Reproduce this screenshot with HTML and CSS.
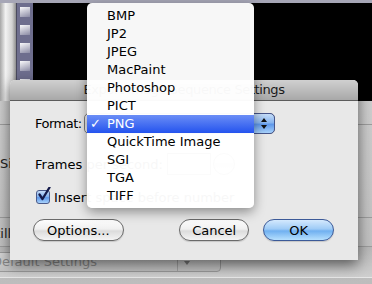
FILE: index.html
```html
<!DOCTYPE html>
<html lang="en">
<head>
  <meta charset="UTF-8" />
  <title>Export Image Sequence Settings</title>
  <link rel="stylesheet" href="styles.css">
</head>
<body>

  <div class="window">
    <div class="topbar"></div>
    <div class="viewer">
      <div class="rail"></div>
      <div class="filmstrip">
        <span class="frame"></span>
        <span class="frame"></span>
        <span class="frame"></span>
        <span class="frame"></span>
        <span class="frame"></span>
      </div>
      <div class="screen"></div>
    </div>
    <div class="panel">
      <div class="panel-row row-top"></div>
      <div class="panel-row row-size"><span class="panel-text">Size:</span></div>
      <div class="panel-row row-still"><span class="panel-text still">Still</span></div>
      <div class="panel-row row-preset">
        <div class="preset">
          <span class="preset-value">Default Settings</span>
          <span class="preset-arrow"></span>
        </div>
      </div>
    </div>
  </div>

  <div class="sheet">
    <div class="sheet-title">Export Image Sequence Settings</div>
    <div class="sheet-body">
      <div class="field-row">
        <label class="field-label">Format:</label>
        <div class="popup">
          <span class="popup-value">PNG</span>
          <span class="popup-arrows">
            <span class="arrow-up"></span>
            <span class="arrow-down"></span>
          </span>
        </div>
      </div>

      <div class="field-row fps-row">
        <label>Frames per second:</label>
        <div class="combo">
          <span class="combo-input"></span>
          <span class="combo-btn"></span>
        </div>
      </div>

      <label class="check-row">
        <span class="checkbox">
          <svg width="16" height="16" viewBox="0 0 16 16"><path d="M3.5 7.5 L6.5 12 L13.5 0.5" fill="none" stroke="#141a4a" stroke-width="2.3" stroke-linecap="round" stroke-linejoin="round"/></svg>
        </span>
        Insert space before number
      </label>

      <div class="buttons">
        <button class="btn">Options...</button>
        <button class="btn btn-cancel">Cancel</button>
        <button class="btn btn-default">OK</button>
      </div>
    </div>
  </div>

  <ul class="menu">
    <li class="menu-item">BMP</li>
    <li class="menu-item">JP2</li>
    <li class="menu-item">JPEG</li>
    <li class="menu-item">MacPaint</li>
    <li class="menu-item">Photoshop</li>
    <li class="menu-item">PICT</li>
    <li class="menu-item is-selected"><span class="check">✓</span>PNG</li>
    <li class="menu-item">QuickTime Image</li>
    <li class="menu-item">SGI</li>
    <li class="menu-item">TGA</li>
    <li class="menu-item">TIFF</li>
  </ul>

</body>
</html>
```

FILE: styles.css
```css
* {
  box-sizing: border-box;
}

body {
  margin: 0;
  width: 372px;
  height: 284px;
  overflow: hidden;
  position: relative;
  font-family: "DejaVu Sans", "Liberation Sans", sans-serif;
  font-size: 13px;
  color: #000;
  background: #c4c4c4;
}

/* movie window behind the sheet */

.window {
  display: flex;
  flex-direction: column;
  height: 284px;
}

.topbar {
  flex: none;
  height: 3px;
  background: #a6a6b6;
}

.viewer {
  flex: none;
  display: flex;
  height: 98px;
}

.rail {
  width: 16px;
  background: linear-gradient(90deg, #a6a6a6, #f2f2f2 35%, #d2d2d2 75%, #8e8e8e);
}

.filmstrip {
  width: 17px;
  display: flex;
  flex-direction: column;
  gap: 8px;
  padding: 4px 0 0 3px;
  background: #6e6e8e;
  border-left: 1px solid #4a4a5e;
}

.frame {
  width: 10px;
  height: 10px;
  background: linear-gradient(160deg, #fafafc, #8a8aa4);
}

.screen {
  flex: 1;
  background: #000;
}

.panel {
  flex: 1;
  display: flex;
  flex-direction: column;
  background: linear-gradient(#cdcdcd, #bdbdbd);
  color: #222;
}

.panel-row {
  flex: none;
  border-bottom: 1px solid #9c9c9c;
}

.row-top {
  height: 24px;
}

.row-size {
  height: 93px;
  padding-top: 31px;
  line-height: 16px;
}

.row-still {
  height: 29px;
  padding-top: 8px;
  line-height: 16px;
}

.still {
  margin-left: -13px;
}

.row-preset {
  height: 31px;
  padding-top: 5px;
  background: linear-gradient(#b8b8b8, #cfcfcf);
  border-bottom-color: #e6e6e6;
}

.preset {
  display: flex;
  width: 241px;
  height: 20px;
  margin-left: -20px;
  border: 1px solid #9a9a9a;
  border-radius: 0 4px 4px 0;
  background: linear-gradient(#d6d6d6, #c2c2c2);
}

.preset-value {
  flex: 1;
  padding-left: 11px;
  line-height: 18px;
  color: #8a8a8a;
}

.preset-arrow {
  width: 43px;
  border-left: 1px solid #a4a4a4;
  position: relative;
}

.preset-arrow::after {
  content: "";
  position: absolute;
  left: 6px;
  top: 8px;
  border-left: 3px solid transparent;
  border-right: 3px solid transparent;
  border-top: 4px solid #7a7a7a;
}

/* sheet */

.sheet {
  position: absolute;
  left: 10px;
  top: 80px;
  width: 348px;
  height: 180px;
  display: flex;
  flex-direction: column;
  background: #e8e8e8;
  border-radius: 5px 5px 0 0;
  box-shadow: 0 5px 14px rgba(0, 0, 0, 0.55);
}

.sheet-title {
  flex: none;
  height: 21px;
  line-height: 19px;
  text-align: center;
  letter-spacing: -0.4px;
  color: #1a1a1a;
  background: linear-gradient(#d0d0d0, #a8a8a8);
  border-bottom: 1px solid #5c5c5c;
  border-radius: 5px 5px 0 0;
}

.sheet-body {
  flex: 1;
  display: flex;
  flex-direction: column;
  padding: 12px 24px 0 25px;
}

.field-row {
  display: flex;
  align-items: center;
}

.field-label {
  width: 49px;
  letter-spacing: -0.5px;
}

.popup {
  display: flex;
  width: 191px;
  height: 21px;
  border: 1px solid #7c7c7c;
  border-radius: 5px;
  background: linear-gradient(#fff, #e8e8e8 50%, #f6f6f6);
}

.popup-value {
  flex: 1;
  padding-left: 10px;
  line-height: 19px;
}

.popup-arrows {
  width: 22px;
  margin: -1px -1px -1px 0;
  display: flex;
  flex-direction: column;
  align-items: center;
  justify-content: center;
  gap: 3px;
  border: 1px solid #46558a;
  border-radius: 0 5px 5px 0;
  background: linear-gradient(#c6ddf8, #88b5ef 45%, #5f98ea 55%, #a8d2fb);
}

.arrow-up,
.arrow-down {
  border-left: 3px solid transparent;
  border-right: 3px solid transparent;
}

.arrow-up {
  border-bottom: 4px solid #111;
}

.arrow-down {
  border-top: 4px solid #111;
}

.fps-row {
  margin-top: 19px;
}

.combo {
  display: flex;
  gap: 2px;
  margin-left: 4px;
  height: 22px;
}

.combo-input {
  width: 44px;
  background: #fff;
  border: 1px solid #8a8a8a;
  border-top-color: #5e5e5e;
}

.combo-btn {
  width: 22px;
  border: 1px solid #7a7a7a;
  border-radius: 11px;
  background: linear-gradient(#fdfdfd, #dedede 55%, #f2f2f2);
}

.check-row {
  display: flex;
  align-items: center;
  margin-top: 15px;
  height: 14px;
}

.checkbox {
  position: relative;
  width: 14px;
  height: 14px;
  margin: 0 4px 0 1px;
  border: 1px solid #4a5a8a;
  border-radius: 3px;
  background: linear-gradient(#c6ddf8, #7fb0ee 50%, #5e98ea 55%, #a8d2fb);
}

.checkbox svg {
  position: absolute;
  left: -1px;
  top: -4px;
}

.buttons {
  display: flex;
  margin: 15px 0 0 -2px;
}

.btn {
  height: 22px;
  padding: 0 13px;
  font-family: inherit;
  font-size: 13px;
  color: #000;
  border: 1px solid #6a6a6a;
  border-radius: 11px;
  background: linear-gradient(#fdfdfd, #f0f0f0 45%, #dcdcdc 55%, #f4f4f4);
  box-shadow: 0 1px 1px rgba(0, 0, 0, 0.15);
}

.btn-cancel {
  margin-left: auto;
  padding: 0 12px;
}

.btn-default {
  margin-left: 14px;
  padding: 0 25px;
  border-color: #3c5a98;
  background: linear-gradient(#d4e9fd, #9ecbf6 45%, #70b0f0 55%, #b6e0fe);
}

/* format menu */

.menu {
  position: absolute;
  left: 87px;
  top: 3px;
  width: 167px;
  margin: 0;
  padding: 4px 0 3px;
  list-style: none;
  background: rgba(255, 255, 255, 0.97);
  border-radius: 5px;
  box-shadow: 0 4px 12px rgba(0, 0, 0, 0.4);
}

.menu-item {
  position: relative;
  height: 18px;
  line-height: 18px;
  padding-left: 20px;
}

.menu-item.is-selected {
  color: #fff;
  background: linear-gradient(#6b8ef6, #2453ee);
}

.check {
  position: absolute;
  left: 3px;
}
```
